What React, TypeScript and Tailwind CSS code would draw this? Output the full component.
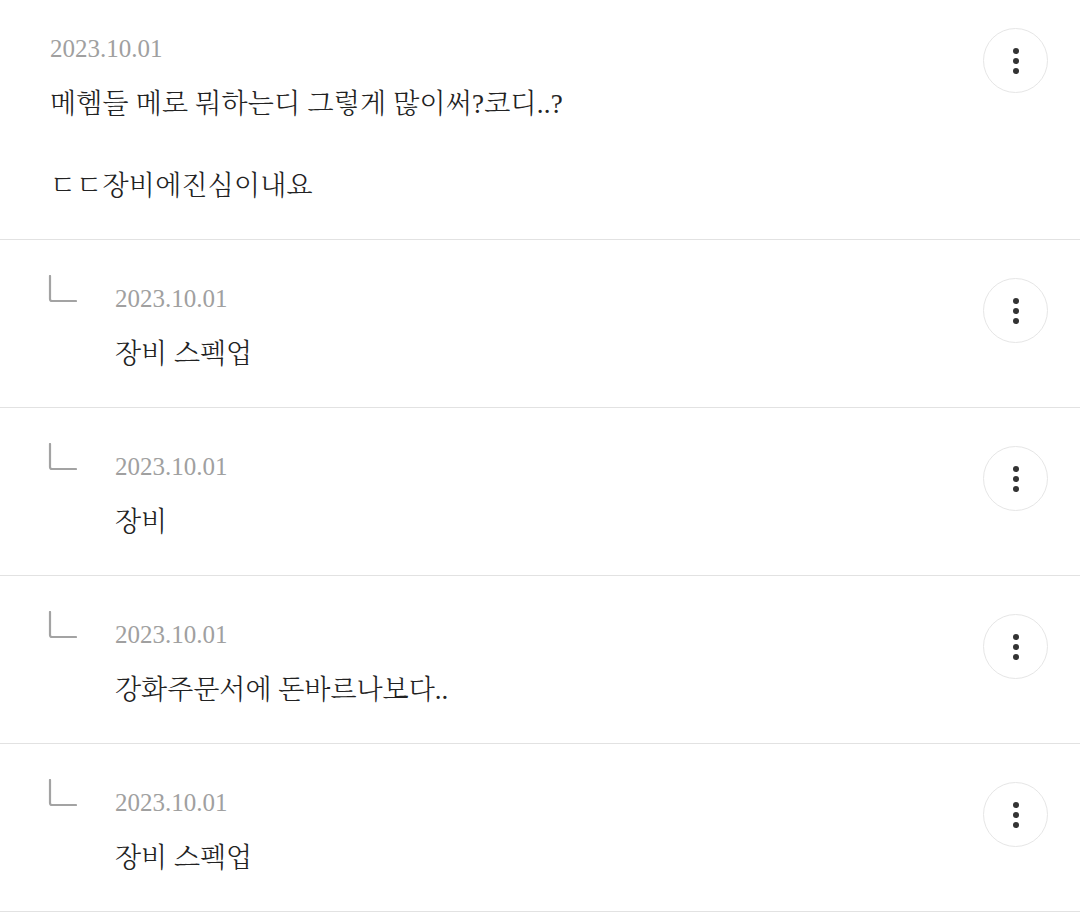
import React from "react";

type Reply = { date: string; text: string };

const replies: Reply[] = [
  { date: "2023.10.01", text: "장비 스펙업" },
  { date: "2023.10.01", text: "장비" },
  { date: "2023.10.01", text: "강화주문서에 돈바르나보다.." },
  { date: "2023.10.01", text: "장비 스펙업" },
];

function MoreButton() {
  return (
    <button
      type="button"
      aria-label="더보기"
      className="flex h-[65px] w-[65px] shrink-0 flex-col items-center justify-center gap-[4px] rounded-full border border-[#e6e6e6] bg-white"
    >
      <span className="block h-[6px] w-[6px] rounded-full bg-[#333]" />
      <span className="block h-[6px] w-[6px] rounded-full bg-[#333]" />
      <span className="block h-[6px] w-[6px] rounded-full bg-[#333]" />
    </button>
  );
}

function ReplyCorner() {
  return (
    <svg width="30" height="30" viewBox="0 0 30 30" fill="none" className="block">
      <path
        d="M3 1 V24 Q3 26 5 26 H29"
        stroke="#a3a3a3"
        strokeWidth="2.2"
        strokeLinecap="round"
        strokeLinejoin="round"
      />
    </svg>
  );
}

function DateLine({ children }: { children: React.ReactNode }) {
  return (
    <div className="font-['Liberation_Serif',serif] text-[25px] leading-[36px] text-[#a0a0a0]">
      {children}
    </div>
  );
}

export default function App() {
  return (
    <div className="min-h-screen w-full bg-white font-['Liberation_Serif','Noto_Serif_CJK_KR',serif] font-light text-[#222]">
      {/* 원댓글 */}
      <div className="flex items-start border-b border-[#e2e2e2] pl-[50px] pr-[32px] pt-[28px] pb-[32px]">
        <div className="flex-1 pt-[3px]">
          <DateLine>2023.10.01</DateLine>
          <div className="mt-[17px] text-[27px] leading-[41px] tracking-[0.2px]">
            <p>메헴들 메로 뭐하는디 그렇게 많이써?코디..?</p>
            <p>&nbsp;</p>
            <p>ㄷㄷ장비에진심이내요</p>
          </div>
        </div>
        <MoreButton />
      </div>

      {/* 답글 목록 */}
      {replies.map((r, i) => (
        <div
          key={i}
          className="flex items-start border-b border-[#e2e2e2] pl-[47px] pr-[32px] pt-[38px] pb-[32px]"
        >
          <div className="w-[68px] shrink-0">
            <div className="-mt-[3px]">
              <ReplyCorner />
            </div>
          </div>
          <div className="flex-1 pt-[3px]">
            <DateLine>{r.date}</DateLine>
            <div className="mt-[17px] text-[27px] leading-[41px]">{r.text}</div>
          </div>
          <MoreButton />
        </div>
      ))}
    </div>
  );
}
